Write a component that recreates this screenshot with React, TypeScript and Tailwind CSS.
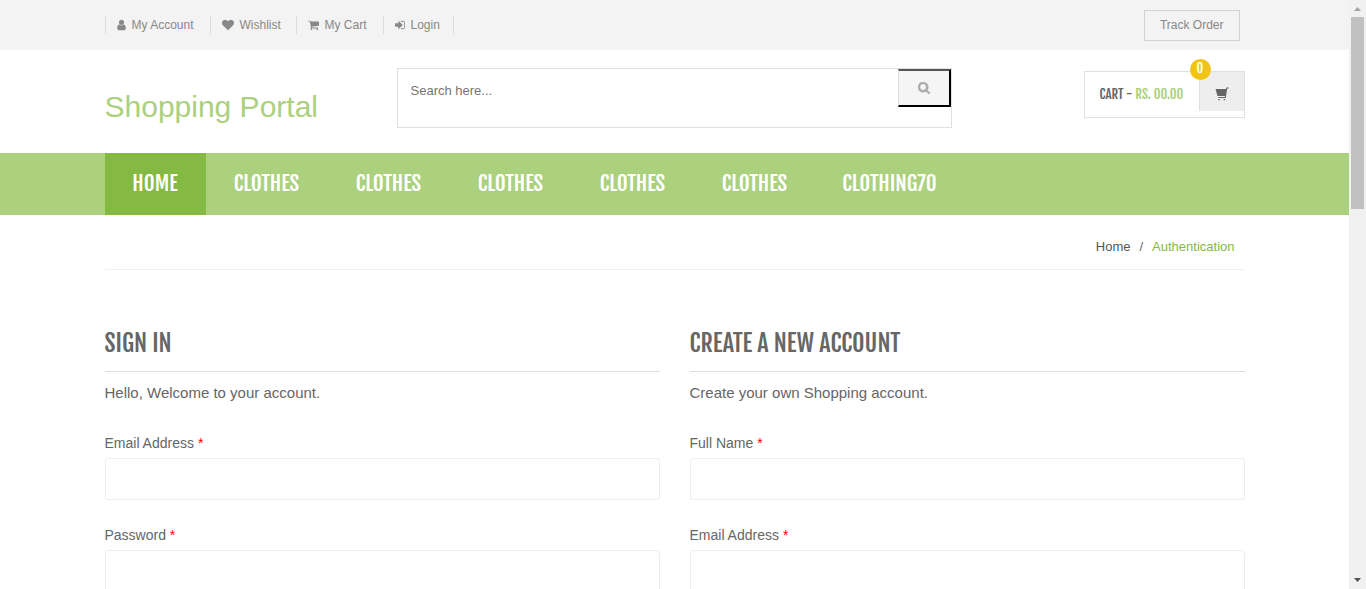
import type { ReactNode } from "react";

const condensed = "font-['Fjalla_One','Liberation_Sans_Narrow',sans-serif] font-normal";

const icons = {
  user: {
    viewBox: "256 0 1280 1792",
    path: "M1536 1399q0 109-62.5 187t-150.5 78h-854q-88 0-150.5-78t-62.5-187q0-85 8.5-160.5t31.5-152 58.5-131 94-89 134.5-34.5q131 128 313 128t313-128q76 0 134.5 34.5t94 89 58.5 131 31.5 152 8.5 160.5zm-256-887q0 159-112.5 271.5t-271.5 112.5-271.5-112.5-112.5-271.5 112.5-271.5 271.5-112.5 271.5 112.5 112.5 271.5z",
  },
  heart: {
    viewBox: "0 0 1792 1792",
    path: "M896 1664q-26 0-44-18l-624-602q-10-8-27.5-26t-55.5-65.5-68-97.5-53.5-121-23.5-138q0-220 127-344t351-124q62 0 126.5 21.5t120 58 95.5 68.5 76 68q36-36 76-68t95.5-68.5 120-58 126.5-21.5q224 0 351 124t127 344q0 221-229 450l-623 600q-18 18-44 18z",
  },
  cart: {
    viewBox: "64 0 1664 1792",
    path: "M704 1536q0 52-38 90t-90 38-90-38-38-90 38-90 90-38 90 38 38 90zm896 0q0 52-38 90t-90 38-90-38-38-90 38-90 90-38 90 38 38 90zm128-1088v512q0 24-16.5 42.5t-40.5 21.5l-1044 122q13 60 13 70 0 16-24 64h920q26 0 45 19t19 45-19 45-45 19h-1024q-26 0-45-19t-19-45q0-11 8-31.5t16-36 21.5-40 15.5-29.5l-177-823h-204q-26 0-45-19t-19-45 19-45 45-19h256q16 0 28.500 6.500t19.500 15.500 13 24.500 8 26 5.500 29.500 4.500 26h1201q26 0 45 19t19 45z",
  },
  signIn: {
    viewBox: "128 0 1536 1792",
    path: "M1312 896q0 26-19 45l-544 544q-19 19-45 19t-45-19-19-45v-288h-448q-26 0-45-19t-19-45v-384q0-26 19-45t45-19h448v-288q0-26 19-45t45-19 45 19l544 544q19 19 19 45zm352-352v704q0 119-84.5 203.5t-203.5 84.5h-320q-13 0-22.5-9.5t-9.5-22.5q0-4-1-20t-.5-26.5 3-23.5 10-19.5 20.5-6.5h320q66 0 113-47t47-113v-704q0-66-47-113t-113-47h-312l-11.5-1-11.5-3-8-5.5-7-9-2-13.5q0-4-1-20t-.5-26.5 3-23.5 10-19.5 20.5-6.5h320q119 0 203.5 84.5t84.5 203.5z",
  },
  search: {
    viewBox: "64 128 1664 1664",
    path: "M1216 832q0-185-131.5-316.5t-316.5-131.5-316.5 131.5-131.5 316.5 131.5 316.5 316.5 131.5 316.5-131.5 131.5-316.5zm512 832q0 52-38 90t-90 38q-54 0-90-38l-343-342q-179 124-399 124-143 0-273.5-55.5t-225-150-150-225-55.5-273.5 55.5-273.5 150-225 225-150 273.5-55.5 273.5 55.5 225 150 150 225 55.5 273.5q0 220-124 399l343 343q37 37 37 90z",
  },
};

type IconName = keyof typeof icons;

function Icon({ name, className }: { name: IconName; className: string }) {
  return (
    <svg viewBox={icons[name].viewBox} fill="currentColor" aria-hidden="true" className={className}>
      <path d={icons[name].path} />
    </svg>
  );
}

function Container({ children }: { children: ReactNode }) {
  return <div className="mx-auto w-full max-w-[1170px] px-[15px]">{children}</div>;
}

const accountLinks: { label: string; icon: IconName; width: string; iconWidth: string }[] = [
  { label: "My Account", icon: "user", width: "w-[105px]", iconWidth: "w-[9px]" },
  { label: "Wishlist", icon: "heart", width: "w-[86px]", iconWidth: "w-[12px]" },
  { label: "My Cart", icon: "cart", width: "w-[87px]", iconWidth: "w-[11px]" },
  { label: "Login", icon: "signIn", width: "w-[70px]", iconWidth: "w-[10px]" },
];

function TopBar() {
  return (
    <div className="bg-[#f3f3f3]">
      <Container>
        <div className="flex h-[50px] items-center justify-between pr-[5px] text-xs text-[#888]">
          <ul className="flex border-l border-[#ddd]">
            {accountLinks.map((link) => (
              <li key={link.label} className={`${link.width} h-[18px] border-r border-[#ddd] pl-[11px]`}>
                <a href="#" className="flex items-center gap-1.5 whitespace-nowrap leading-[18px]">
                  <Icon name={link.icon} className={`${link.iconWidth} h-3 shrink-0`} />
                  {link.label}
                </a>
              </li>
            ))}
          </ul>
          <a href="#" className="border border-[#d2d2d2] px-[15px] py-1.5 leading-[17px]">
            Track Order
          </a>
        </div>
      </Container>
    </div>
  );
}

function CartBox() {
  return (
    <a href="#" className="relative flex h-[47px] w-[161px] items-start border border-[#e0e0e0]">
      <span className={`${condensed} flex-1 whitespace-nowrap pl-[15px] text-[13px] leading-[45px] text-[#666]`}>
        CART - <span className="text-[#abd07e]">RS. 00.00</span>
      </span>
      <span className="flex h-[39px] w-[45px] items-center justify-center border-l border-[#e0e0e0] bg-[#eee] pt-1">
        <svg viewBox="0 0 14 14" fill="currentColor" aria-hidden="true" className="size-3.5 text-[#666]">
          <path d="M.5 2H11l.4-1.500h2.400v1.100h-1.600L10.700 11H3.300V10h6.500l.2-.9H2.500zM3.300 12h1.500v1.200H3.300zM8.600 12h1.500v1.200H8.600z" />
        </svg>
      </span>
      <span className={`${condensed} absolute -top-[13px] right-[33px] size-[21px] rounded-full bg-[#f1c40f] text-center text-[13px] leading-[18px] text-white`}>
        0
      </span>
    </a>
  );
}

function Header() {
  return (
    <header>
      <Container>
        <div className="grid h-[103px] grid-cols-[292px_555px_1fr] items-start pt-[18px]">
          <a href="#" className="pt-[21px] text-[30px] leading-9 text-[#abd07e]">
            Shopping Portal
          </a>
          <form className="flex h-[60px] items-start border border-[#e0e0e0]" onSubmit={(e) => e.preventDefault()}>
            <input
              type="search"
              aria-label="Search"
              placeholder="Search here..."
              className="h-[42px] min-w-0 flex-1 px-[13px] text-[13px] text-[#666] outline-none placeholder:text-[#757575]"
            />
            <button
              type="submit"
              aria-label="Search"
              className="flex h-[38px] w-[53px] items-center justify-center border-2 border-l border-t-[#555] border-r-black border-b-black border-l-[#ddd] bg-[#f5f5f5] text-[#aaa]"
            >
              <Icon name="search" className="size-3 stroke-current stroke-[80]" />
            </button>
          </form>
          <div className="flex justify-end pt-[3px]">
            <CartBox />
          </div>
        </div>
      </Container>
    </header>
  );
}

const categories = ["CLOTHES", "CLOTHES", "CLOTHES", "CLOTHES", "CLOTHES"];

function Nav() {
  return (
    <nav className="bg-[#abd07e]">
      <Container>
        <div className={`${condensed} flex h-[62px] text-[21px] leading-[60px] whitespace-nowrap text-white`}>
          <a href="#" className="w-[101px] bg-[#84b943] text-center">HOME</a>
          {categories.map((label, i) => (
            <a key={i} href="#" className="w-[122px] text-center">{label}</a>
          ))}
          <a href="#" className="w-[148px] text-center">CLOTHING70</a>
        </div>
      </Container>
    </nav>
  );
}

function Field({ id, label, type }: { id: string; label: string; type: string }) {
  return (
    <div className="mb-[25px]">
      <label htmlFor={id} className="block text-sm leading-5">
        {label} <span className="text-[#f00]">*</span>
      </label>
      <input id={id} type={type} className="mt-[5px] block h-[42px] w-full rounded-[3px] border border-[#eee] bg-white px-3 outline-none" />
    </div>
  );
}

function Panel({ title, intro, children }: { title: string; intro: string; children: ReactNode }) {
  return (
    <section>
      <h2 className={`${condensed} border-b border-[#ddd] pt-px pb-[11px] text-2xl leading-[34px] text-[#666]`}>{title}</h2>
      <p className="mt-[11px] mb-[30px] text-[15px] leading-5">{intro}</p>
      <form onSubmit={(e) => e.preventDefault()}>{children}</form>
    </section>
  );
}

function Scrollbar() {
  return (
    <div aria-hidden="true" className="flex h-full w-[17px] shrink-0 flex-col items-center justify-between bg-[#f1f1f1]">
      <div className="flex flex-col items-center">
        <svg viewBox="0 0 17 17" className="size-[17px]"><path d="M5 11h7L8.500 7z" fill="#a3a3a3" /></svg>
        <div className="h-[192px] w-[13px] bg-[#c1c1c1]" />
      </div>
      <svg viewBox="0 0 17 17" className="size-[17px] shrink-0"><path d="M5 6h7L8.500 10z" fill="#505050" /></svg>
    </div>
  );
}

export default function App() {
  return (
    <div className="flex h-screen overflow-hidden bg-white font-['Liberation_Sans',Arial,sans-serif] text-[#666]">
      <div className="h-full min-w-0 flex-1 overflow-hidden">
        <TopBar />
        <Header />
        <Nav />
        <Container>
          <div className="flex justify-end gap-[9px] border-b border-[#f0f0f0] pt-[22px] pr-2.5 pb-3 text-[13px] leading-5">
            <a href="#" className="text-[#555]">Home</a>
            <span>/</span>
            <span className="text-[#84b943]">Authentication</span>
          </div>
          <main className="grid grid-cols-2 gap-[30px] pt-[55px]">
            <Panel title="SIGN IN" intro="Hello, Welcome to your account.">
              <Field id="login-email" label="Email Address" type="email" />
              <Field id="login-password" label="Password" type="password" />
            </Panel>
            <Panel title="CREATE A NEW ACCOUNT" intro="Create your own Shopping account.">
              <Field id="full-name" label="Full Name" type="text" />
              <Field id="new-email" label="Email Address" type="email" />
            </Panel>
          </main>
        </Container>
      </div>
      <Scrollbar />
    </div>
  );
}
